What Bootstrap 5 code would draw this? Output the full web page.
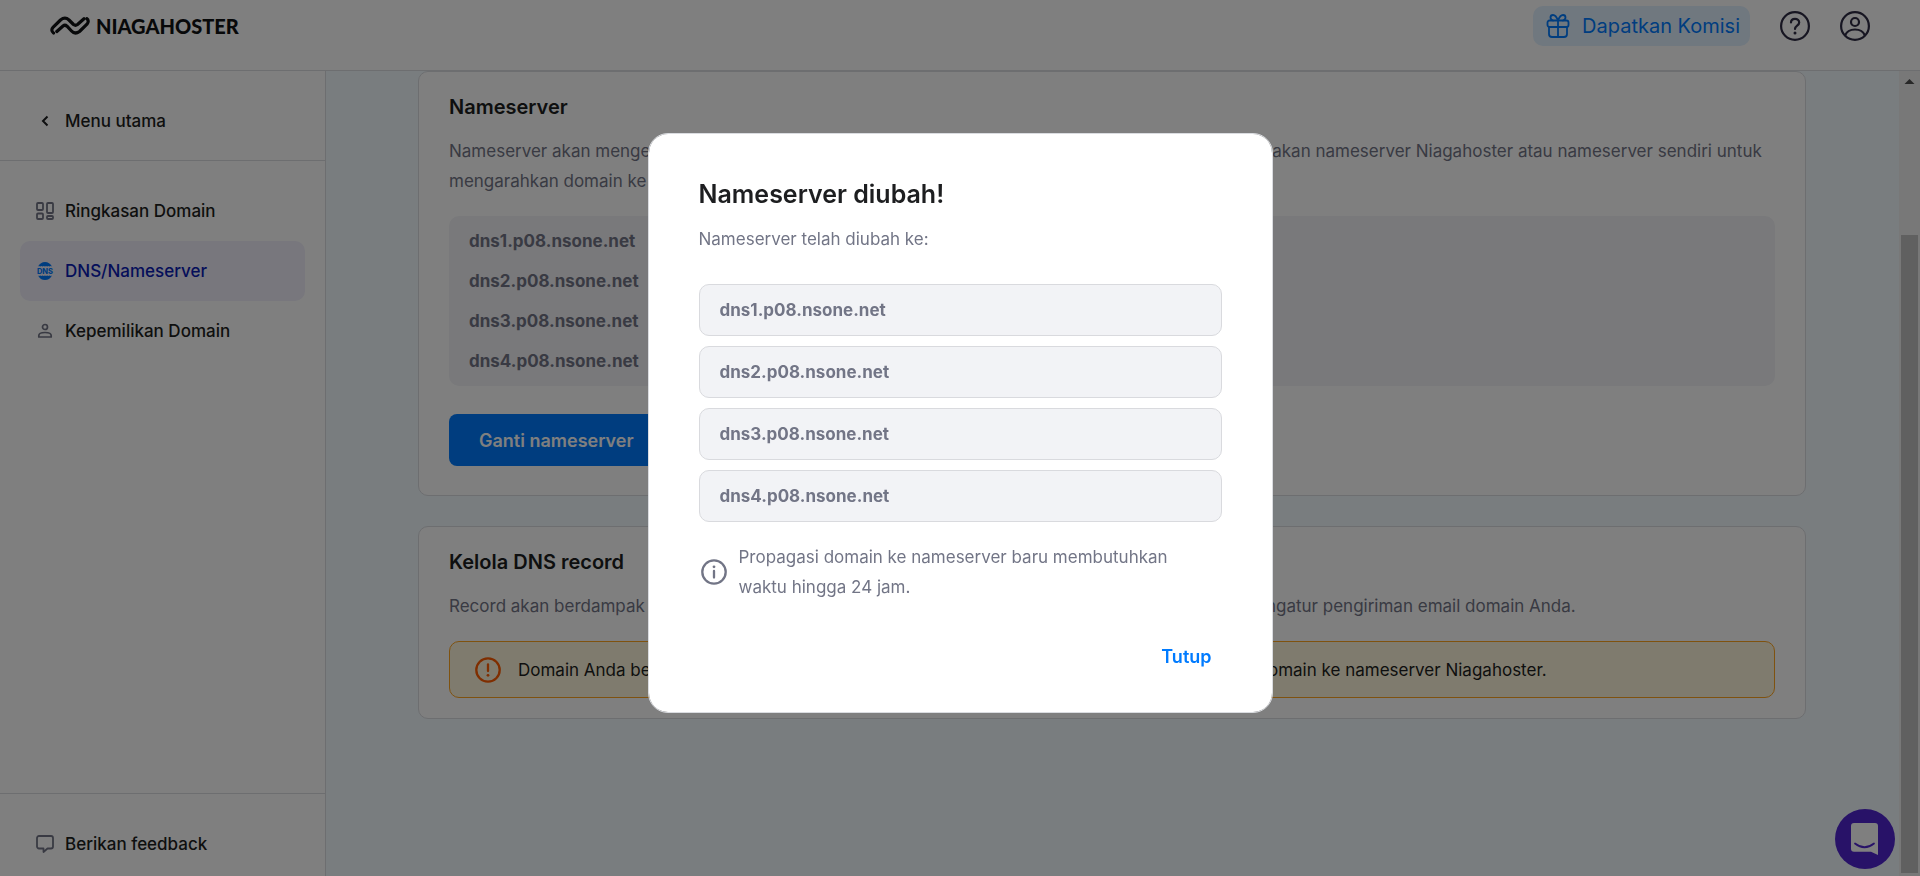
<!DOCTYPE html>
<html lang="id">
<head>
<meta charset="utf-8">
<meta name="viewport" content="width=device-width, initial-scale=1">
<title>DNS/Nameserver - Niagahoster</title>
<link href="https://cdn.jsdelivr.net/npm/bootstrap@5.3.0/dist/css/bootstrap.min.css" rel="stylesheet">
<style>
  :root { --line: #dadce0; --ink: #1d1e20; --muted: #727586; --brand: #007bff; }
  body { font-family: Inter, "Liberation Sans", sans-serif; font-size: 17px; line-height: 30px; color: var(--ink); background: #fff; }
  svg { display: block; flex: none; }
  .topbar { border-bottom: 1px solid var(--line); padding: 6px 50px 24px; }
  .brand-name { font-family: Lato, sans-serif; font-weight: 900; font-size: 20px; color: #101214; line-height: 40px; }
  .btn-komisi { background: #e0f0ff; color: var(--brand); border: 0; border-radius: 10px; height: 40px; padding: 0 10px 0 13px; font-size: 20px; gap: 12px; }
  .btn-komisi:hover { background: #d0e7ff; color: var(--brand); }
  .icon-btn { border: 0; background: none; padding: 0; color: #2f2c45; }
  .side { width: 326px; border-right: 1px solid var(--line); }
  .side-link { height: 60px; padding: 0 15px; gap: 10px; border-radius: 10px; color: var(--ink); text-decoration: none; font-weight: 500; }
  .side-link svg { color: var(--muted); }
  .side-link.active { background: #f0eefa; color: #0a1cb4; }
  .side-link.active svg { color: var(--brand); }
  .side-back { padding: 20px 20px 9px; border-bottom: 1px solid var(--line); }
  .side-foot { padding: 20px 20px 2px; border-top: 1px solid var(--line); }
  .content-bg { background: #f3fbff; padding-right: 1px; }
  .content-col { max-width: 1388px; }
  .panel { background: #fff; border: 1px solid var(--line); border-radius: 10px; padding: 20px 30px; }
  .panel h2 { font-size: 20px; line-height: 30px; font-weight: 600; margin: 0 0 14px; }
  .panel p { color: var(--muted); margin: 0; }
  .ns-box { background: #f2f3f6; border-radius: 10px; padding: 5px 20px; color: var(--muted); font-weight: 700; line-height: 40px; margin: 20px 0 28px; }
  .btn-ganti { background: var(--brand); color: #fff; border: 0; border-radius: 8px; height: 52px; padding: 0 30px; font-size: 18px; font-weight: 600; margin-bottom: 9px; }
  .notice { background: #fff6dc; border: 1px solid #ffa41f; border-radius: 10px; height: 57px; padding: 0 23px; gap: 15px; }
  .scrollbar-col { width: 21px; background: #f1f1f1; }
  .scroll-thumb { background: #c1c1c1; width: 17px; flex: 638 0 0; }
  .chat-btn { right: 25px; bottom: 7px; width: 60px; height: 60px; border: 0; padding: 0; background: #5025d1; color: #fff; z-index: 2; }
  .ns-modal .modal-dialog { max-width: 625px; margin: 133px auto 0; }
  .ns-modal .modal-content { border: 1px solid var(--line); border-radius: 20px; padding: 44px 50px 30px; }
  .ns-modal h1 { font-size: 25px; line-height: 32px; font-weight: 600; margin: 0 0 14px; }
  .ns-modal p { color: var(--muted); margin: 0; }
  .ns-item { background: #f2f3f6; border: 1px solid #d9dade; border-radius: 10px; color: var(--muted); font-weight: 700; height: 52px; line-height: 50px; padding: 0 20px; }
  .btn-tutup { color: var(--brand); font-size: 18px; font-weight: 600; border: 0; padding: 10px; line-height: 30px; }
  .modal-backdrop { z-index: 1050; }
</style>
</head>
<body>
<div class="vh-100 d-flex flex-column overflow-hidden position-relative">
  <header class="topbar d-flex align-items-center justify-content-between">
    <a href="#" class="d-flex align-items-center text-decoration-none" style="gap:6px">
      <svg width="40" height="20" viewBox="0 0 40 20" fill="none" stroke="#101214" stroke-width="3.2" stroke-linecap="round" stroke-linejoin="round"><path d="M3.500 17C1.400 15.600 1.400 13 3 11.400L10.500 4Q15 .300 19 4L23.500 8.500Q25.500 10 27.500 8.500L34 2.800"/><path d="M6.800 15.500L13 10Q15 8.400 17 10.200L21.500 15Q25 18.800 29.500 15.500L37 8.200C38.800 6 38.500 3.800 36.800 2.600"/></svg>
      <span class="brand-name">NIAGAHOSTER</span>
    </a>
    <div class="d-flex align-items-center" style="gap:30px">
      <button type="button" class="btn btn-komisi d-flex align-items-center">
        <svg width="24" height="24" viewBox="0 0 24 24" fill="none" stroke="currentColor" stroke-width="1.800" stroke-linejoin="round" stroke-linecap="round"><rect x="1.500" y="6.500" width="21" height="6.500" rx="2"/><path d="M3 13v7a3 3 0 0 0 3 3h12a3 3 0 0 0 3-3v-7M12 6.500V23M12 6.500C10.500 2.500 8.800 1 7 1S4.500 2.200 4.500 3.500 5.500 6 7 6.500M12 6.500C13.500 2.500 15.200 1 17 1s2.500 1.200 2.500 2.500S18.500 6 17 6.500"/></svg>
        <span>Dapatkan Komisi</span>
      </button>
      <button type="button" class="icon-btn" aria-label="Bantuan"><svg width="30" height="30" viewBox="0 0 30 30" fill="none" stroke="currentColor" stroke-width="2.200" stroke-linecap="round"><circle cx="15" cy="15" r="13.900"/><path d="M11 11.500C11 9.300 12.700 7.800 15 7.800s4.200 1.500 4.200 3.700c0 3.200-4.200 3.200-4.200 6.500"/><circle cx="15" cy="22" r="1.500" fill="currentColor" stroke="none"/></svg></button>
      <button type="button" class="icon-btn" aria-label="Akun"><svg width="30" height="30" viewBox="0 0 30 30" fill="none" stroke="currentColor" stroke-width="2.200"><circle cx="15" cy="15" r="13.900"/><circle cx="15" cy="11" r="4"/><path d="M5 24.500C6.500 20.800 10.300 18.500 15 18.500s8.500 2.300 10 6"/></svg></button>
    </div>
  </header>

  <div class="d-flex flex-grow-1 overflow-hidden">
    <nav class="side d-flex flex-column flex-shrink-0">
      <div class="side-back">
        <a href="#" class="side-link d-flex align-items-center"><svg width="20" height="20" viewBox="0 0 20 20" fill="none" stroke="#1d1e20" stroke-width="2"><path d="M12.500 5.500L8 10l4.500 4.500"/></svg>Menu utama</a>
      </div>
      <div class="px-3 flex-grow-1" style="margin:20px 4px 0">
        <a href="#" class="side-link d-flex align-items-center"><svg width="20" height="20" viewBox="0 0 20 20" fill="none" stroke="currentColor" stroke-width="1.800"><rect x="2" y="2" width="6" height="7" rx="1"/><rect x="12" y="2" width="6" height="10" rx="1"/><rect x="2" y="12.500" width="6" height="5.500" rx="1"/><rect x="12" y="15" width="6" height="3" rx="1"/></svg>Ringkasan Domain</a>
        <a href="#" class="side-link active d-flex align-items-center"><svg width="20" height="20" viewBox="0 0 20 20" fill="currentColor"><path d="M3 5.500Q5.500 1 10 1t7 4.500l-1.200-.600-1.200.600-1.200-.600-1.200.600-1.200-.600-1 .600-1.200-.600-1.200.600-1.200-.600-1.200.600-1.200-.600zM3 14.500Q5.500 19 10 19t7-4.500l-1.200.600-1.200-.600-1.200.600-1.200-.600-1.200.600-1-.600-1.200.600-1.200-.600-1.200.600-1.200-.600-1.200.600z"/><text x="10" y="12.600" font-size="7.500" font-weight="800" text-anchor="middle" font-family="Inter, sans-serif">DNS</text></svg>DNS/Nameserver</a>
        <a href="#" class="side-link d-flex align-items-center"><svg width="20" height="20" viewBox="0 0 20 20" fill="none" stroke="currentColor" stroke-width="1.700"><circle cx="10" cy="6" r="2.500"/><path d="M3.800 16v-1.300C3.800 12.500 7 11.500 10 11.500s6.200 1 6.200 3.200V16z" stroke-linejoin="round"/></svg>Kepemilikan Domain</a>
      </div>
      <div class="side-foot">
        <a href="#" class="side-link d-flex align-items-center"><svg width="20" height="20" viewBox="0 0 20 20" fill="none" stroke="currentColor" stroke-width="1.800" stroke-linejoin="round"><path d="M4 2h12a2 2 0 0 1 2 2v8.500a2 2 0 0 1-2 2h-3.500L8.500 18v-3.500H4a2 2 0 0 1-2-2V4a2 2 0 0 1 2-2z"/></svg>Berikan feedback</a>
      </div>
    </nav>

    <main class="content-bg flex-grow-1 overflow-hidden">
      <div class="content-col mx-auto">
        <section class="panel">
          <h2>Nameserver</h2>
          <p>Nameserver akan mengendalikan server yang melayani DNS record domain Anda. Anda bisa menggunakan nameserver Niagahoster atau nameserver sendiri untuk mengarahkan domain ke server hosting.</p>
          <ul class="ns-box list-unstyled">
            <li>dns1.p08.nsone.net</li>
            <li>dns2.p08.nsone.net</li>
            <li>dns3.p08.nsone.net</li>
            <li>dns4.p08.nsone.net</li>
          </ul>
          <button type="button" class="btn btn-ganti">Ganti nameserver</button>
        </section>
        <section class="panel" style="margin-top:30px">
          <h2>Kelola DNS record</h2>
          <p>Record akan berdampak pada cara kerja domain Anda, saat mengarahkan domain ke website atau mengatur pengiriman email domain Anda.</p>
          <div class="notice d-flex align-items-center" style="margin-top:20px">
            <svg width="30" height="30" viewBox="0 0 30 30" fill="none" stroke="#ff5c00" stroke-width="2.300" stroke-linecap="round"><circle cx="15" cy="15" r="11.700"/><path d="M15 9.500v6.500"/><circle cx="15" cy="20.300" r="1.400" fill="#ff5c00" stroke="none"/></svg>
            <span>Domain Anda belum menggunakan nameserver kami. Untuk mengatur DNS record, arahkan domain ke nameserver Niagahoster.</span>
          </div>
        </section>
      </div>
    </main>

    <div class="scrollbar-col d-flex flex-column align-items-center flex-shrink-0" aria-hidden="true">
      <svg width="21" height="21" viewBox="0 0 21 21"><path d="M5.500 13h10l-5-5z" fill="#505050"/></svg>
      <div style="flex:143 0 0"></div>
      <div class="scroll-thumb"></div>
      <div style="flex:3 0 0"></div>
    </div>
  </div>

  <button type="button" class="chat-btn btn rounded-circle position-absolute d-flex align-items-center justify-content-center" aria-label="Buka chat">
    <svg width="30" height="34" viewBox="0 0 30 34"><path d="M4 1h21a3 3 0 0 1 3 3v29l-7-3.300H4a3 3 0 0 1-3-3V4a3 3 0 0 1 3-3z" fill="#fff"/><path d="M5 21.500q9.500 7.500 19 0" fill="none" stroke="#5025d1" stroke-width="1.800" stroke-linecap="round"/></svg>
  </button>
</div>

<div class="modal-backdrop show"></div>
<div class="modal ns-modal d-block" tabindex="-1" role="dialog" aria-labelledby="ns-title">
  <div class="modal-dialog">
    <div class="modal-content">
      <h1 id="ns-title">Nameserver diubah!</h1>
      <p>Nameserver telah diubah ke:</p>
      <ul class="list-unstyled d-flex flex-column mb-0" style="gap:10px;margin-top:30px">
        <li class="ns-item">dns1.p08.nsone.net</li>
        <li class="ns-item">dns2.p08.nsone.net</li>
        <li class="ns-item">dns3.p08.nsone.net</li>
        <li class="ns-item">dns4.p08.nsone.net</li>
      </ul>
      <div class="d-flex align-items-center pe-3" style="gap:10px;margin-top:20px">
        <svg width="30" height="30" viewBox="0 0 30 30" fill="none" stroke="#727586" stroke-width="2.300" stroke-linecap="round"><circle cx="15" cy="15" r="11.700"/><path d="M15 14v6.500"/><circle cx="15" cy="9.800" r="1.400" fill="#727586" stroke="none"/></svg>
        <p>Propagasi domain ke nameserver baru membutuhkan waktu hingga 24 jam.</p>
      </div>
      <div class="d-flex justify-content-end" style="margin-top:30px">
        <button type="button" class="btn btn-tutup">Tutup</button>
      </div>
    </div>
  </div>
</div>
<script src="https://cdn.jsdelivr.net/npm/bootstrap@5.3.0/dist/js/bootstrap.bundle.min.js"></script>
</body>
</html>
